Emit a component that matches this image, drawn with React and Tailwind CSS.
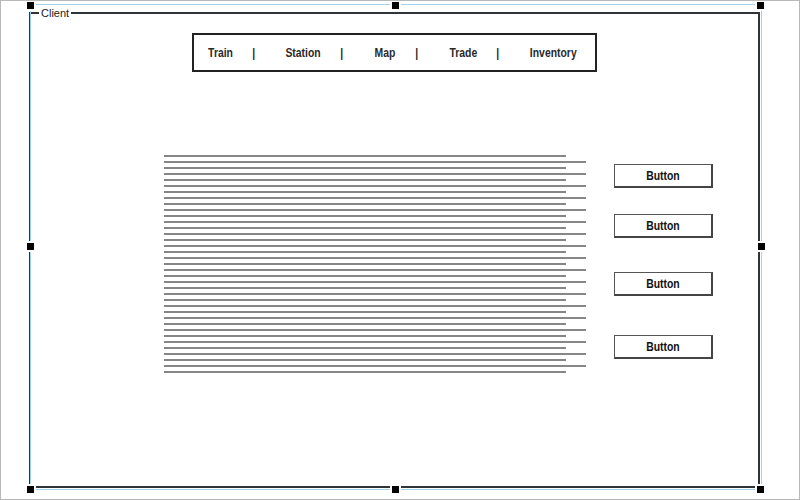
import React from "react";

const narrow = { fontFamily: '"Liberation Sans", Arial, sans-serif' };

function Handle({ className }) {
  return (
    <div className={"absolute w-[11px] h-[11px] border-2 border-white bg-black " + className} />
  );
}

const navItems = [
  { t: "Train", cls: "ml-[2px] w-[49px]" },
  { t: "|", cls: "ml-[6px] w-[6px]" },
  { t: "Station", cls: "ml-[16px] w-[61px]" },
  { t: "|", cls: "ml-[5px] w-[6px]" },
  { t: "Map", cls: "ml-[15px] w-[50px]" },
  { t: "|", cls: "ml-[4px] w-[6px]" },
  { t: "Trade", cls: "ml-[19px] w-[49px]" },
  { t: "|", cls: "ml-[7px] w-[6px]" },
  { t: "Inventory", cls: "ml-[22px] w-[61px]" },
];

const lines = Array.from({ length: 37 }, (_, i) => i % 2 === 1);

const buttons = ["mt-[9px]", "mt-[26px]", "mt-[34px]", "mt-[39px]"];

export default function App() {
  return (
    <div className="relative w-[800px] h-[500px] bg-white border border-[#b8b8b8] overflow-hidden">
      {/* Client container */}
      <div className="relative ml-[28px] mt-[11px] w-[731px] h-[476px] border-2 border-[#2e3438]">
        <div
          className="absolute top-[-7px] left-[8px] bg-white px-[2px] text-[11px] leading-[12px] text-[#222]"
          style={{ fontFamily: '"Liberation Sans", Arial, sans-serif' }}
        >
          Client
        </div>

        {/* Nav bar */}
        <div className="mx-auto mt-[19px] w-[405px] h-[39px] border-2 border-[#222] flex items-center">
          {navItems.map((n, i) => (
            <span key={i} className={"flex justify-center " + n.cls}>
              <span
                className="inline-block scale-x-[0.8] font-bold text-[13px] leading-none text-[#2a2a2a] whitespace-nowrap"
                style={narrow}
              >
                {n.t}
              </span>
            </span>
          ))}
        </div>

        {/* Content */}
        <div className="flex mt-[83px] ml-[133px]">
          <div className="flex flex-col gap-[4px] w-[422px]">
            {lines.map((long, i) => (
              <div
                key={i}
                className={long ? "h-[2px] w-[422px] bg-[#868686]" : "h-[2px] w-[402px] bg-[#868686]"}
              />
            ))}
          </div>
          <div className="flex flex-col ml-[28px]">
            {buttons.map((m, i) => (
              <div
                key={i}
                className={"w-[99px] h-[24px] bg-white border border-[#555] border-r-2 border-b-2 border-r-[#444] border-b-[#444] flex items-center justify-center " + m}
              >
                <span
                  className="inline-block scale-x-[0.8] font-bold text-[13px] leading-none text-[#111]"
                  style={narrow}
                >
                  Button
                </span>
              </div>
            ))}
          </div>
        </div>
      </div>

      {/* Selection overlay */}
      <div className="absolute left-[29px] top-[3px] w-[732px] h-[486px] border border-[#9fd4ea] pointer-events-none" />
      <Handle className="left-[24px] top-[-1px]" />
      <Handle className="left-[389px] top-[-1px]" />
      <Handle className="left-[754px] top-[-1px]" />
      <Handle className="left-[24px] top-[240px]" />
      <Handle className="left-[755px] top-[240px]" />
      <Handle className="left-[24px] top-[483px]" />
      <Handle className="left-[389px] top-[483px]" />
      <Handle className="left-[754px] top-[483px]" />
    </div>
  );
}
